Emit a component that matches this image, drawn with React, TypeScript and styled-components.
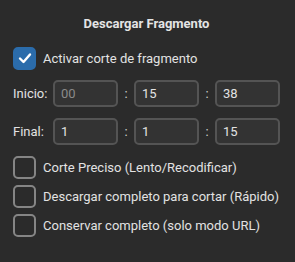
import React from 'react';
import styled, { createGlobalStyle } from 'styled-components';

const GlobalStyle = createGlobalStyle`
  html, body {
    margin: 0;
    padding: 0;
    background: #2b2b2b;
    font-family: Roboto, "Liberation Sans", sans-serif;
  }
`;

function App() {
  return (
    <React.Fragment>
      <GlobalStyle />
      <PanelWrapper>
        <TitleWrapper>Descargar Fragmento</TitleWrapper>

        <CheckRow>
          <CheckBox checked>
            <svg width="16" height="16" viewBox="0 0 16 16">
              <path d="M3 8.5 L6.5 12 L13 4.5" fill="none" stroke="#ffffff" strokeWidth="2.4" strokeLinecap="round" strokeLinejoin="round" />
            </svg>
          </CheckBox>
          <CheckLabel>Activar corte de fragmento</CheckLabel>
        </CheckRow>

        <TimeRows>
          <TimeRow>
            <TimeLabel>Inicio:</TimeLabel>
            <TimeInput placeholder="00" defaultValue="" />
            <Colon>:</Colon>
            <TimeInput defaultValue="15" />
            <Colon>:</Colon>
            <TimeInput defaultValue="38" />
          </TimeRow>
          <TimeRow>
            <TimeLabel>Final:</TimeLabel>
            <TimeInput defaultValue="1" />
            <Colon>:</Colon>
            <TimeInput defaultValue="1" />
            <Colon>:</Colon>
            <TimeInput defaultValue="15" />
          </TimeRow>
        </TimeRows>

        <OptionList>
          <CheckRow>
            <CheckBox />
            <CheckLabel>Corte Preciso (Lento/Recodificar)</CheckLabel>
          </CheckRow>
          <CheckRow>
            <CheckBox />
            <CheckLabel>Descargar completo para cortar (Rápido)</CheckLabel>
          </CheckRow>
          <CheckRow>
            <CheckBox />
            <CheckLabel>Conservar completo (solo modo URL)</CheckLabel>
          </CheckRow>
        </OptionList>
      </PanelWrapper>
    </React.Fragment>
  );
}

const PanelWrapper = styled.div`
  display: flex;
  flex-direction: column;
  width: 295px;
  height: 262px;
  box-sizing: border-box;
  padding: 16px 15px 0 13px;
  background: #2b2b2b;
  color: #e2e2e2;
`;

const TitleWrapper = styled.div`
  text-align: center;
  font-size: 13px;
  font-weight: bold;
  line-height: 16px;
  color: #e4e4e4;
  margin-bottom: 14px;
`;

const CheckRow = styled.label`
  display: flex;
  align-items: center;
  gap: 7px;
  height: 24px;
`;

const CheckBox = styled.span<{ checked?: boolean }>`
  display: flex;
  align-items: center;
  justify-content: center;
  box-sizing: border-box;
  width: 23px;
  height: 23px;
  border-radius: 5px;
  background: ${p => (p.checked ? '#2b6cab' : 'transparent')};
  border: 2px solid ${p => (p.checked ? '#2b6cab' : '#858585')};
`;

const CheckLabel = styled.span`
  font-size: 13px;
  color: #e2e2e2;
`;

const TimeRows = styled.div`
  display: flex;
  flex-direction: column;
  gap: 11px;
  margin-top: 10px;
`;

const TimeRow = styled.div`
  display: flex;
  align-items: center;
`;

const TimeLabel = styled.span`
  width: 40px;
  font-size: 13px;
  color: #e2e2e2;
`;

const Colon = styled.span`
  width: 16px;
  text-align: center;
  font-size: 13px;
  color: #d0d0d0;
`;

const TimeInput = styled.input`
  flex: 1;
  min-width: 0;
  box-sizing: border-box;
  height: 27px;
  padding: 0 6px;
  background: #333333;
  border: 2px solid #545454;
  border-radius: 5px;
  color: #e2e2e2;
  font-family: Roboto, "Liberation Sans", sans-serif;
  font-size: 13px;
  outline: none;

  &::placeholder {
    color: #8a8a8a;
  }
`;

const OptionList = styled.div`
  display: flex;
  flex-direction: column;
  gap: 5px;
  margin-top: 10px;
`;

export default App;
